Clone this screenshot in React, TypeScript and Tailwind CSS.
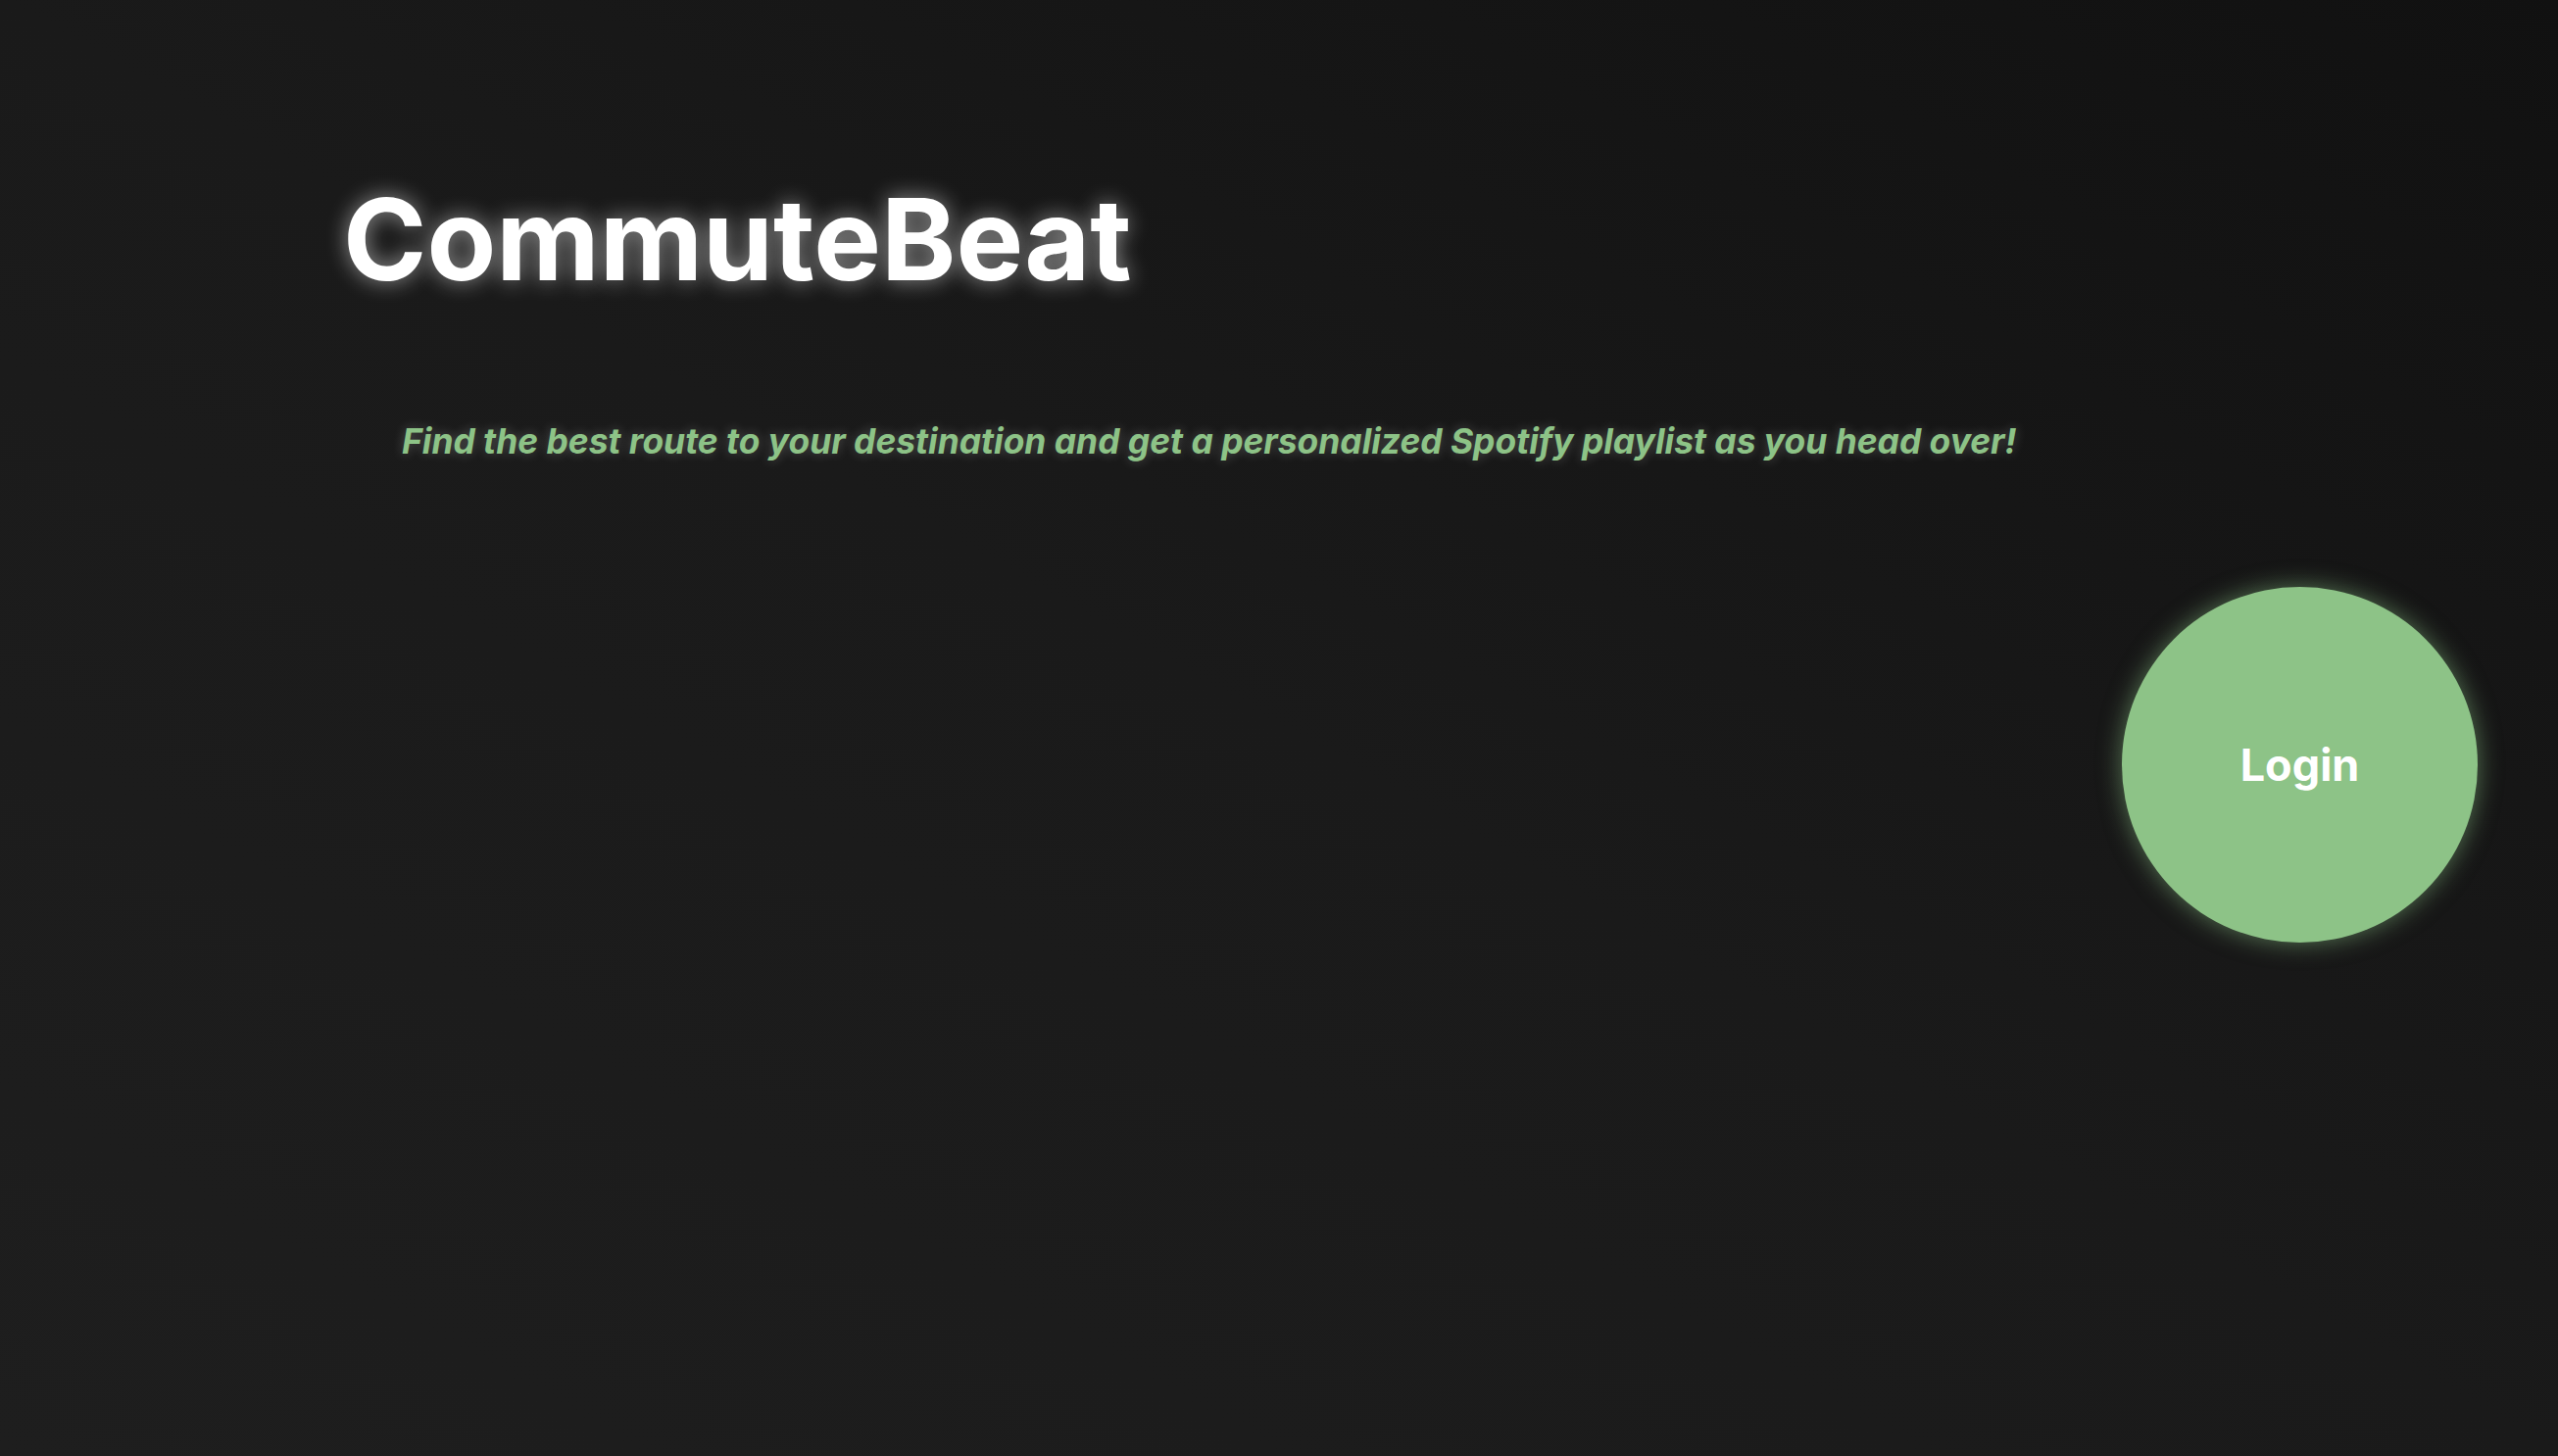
export default function App() {
  return (
    <main
      className="min-h-screen w-full bg-linear-to-tr from-[#1e1e1e] via-[#1a1a1a] to-[#111111] text-white"
      style={{ fontFamily: "Inter, 'Noto Sans', sans-serif" }}
    >
      <div className="flex flex-col">
        <header className="pl-[350px] pt-[175px]">
          <h1 className="text-[115.5px] leading-[1.2] font-bold text-white [text-shadow:0_0_22px_rgba(255,255,255,0.55)]">
            CommuteBeat
          </h1>
          <p className="mt-[119px] pl-[60px] text-[35.4px] leading-none font-bold italic text-[#8dc387] [text-shadow:0_0_12px_rgba(255,255,255,0.25)]">
            Find the best route to your destination and get a personalized Spotify playlist as you head over!
          </p>
        </header>

        <div className="flex justify-end pr-[82px] mt-[131px]">
          <button className="w-[363px] h-[363px] rounded-full bg-[#8dc387] text-white text-[45px] font-bold shadow-[0_0_24px_rgba(141,195,135,0.55)]">
            Login
          </button>
        </div>
      </div>
    </main>
  );
}
